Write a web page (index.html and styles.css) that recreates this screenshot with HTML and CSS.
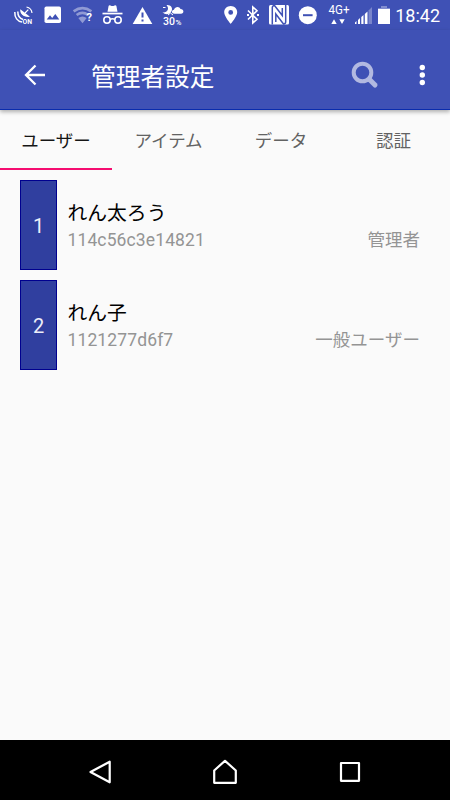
FILE: index.html
```
<!DOCTYPE html>
<html lang="ja">
    <head>
        <meta charset="utf-8">
        <title>管理者設定</title>
        <link rel="stylesheet" href="styles.css">
    </head>
    <body>
        <div class="statusBar">
            <div class="statusLeft">
                <!-- gps -->
                <svg width="30" height="30" viewBox="0 0 30 30">
                    <path class="line" stroke-width="1.500" d="M6.800 12C6.500 17.500 9.500 21.500 14 22M9.800 11.500C9.800 15 11.500 18.500 15 19.500"/>
                    <path class="fill" d="M12.300 9.200C11.500 13 15.500 17.800 22 16.800Z"/>
                    <path class="line" stroke-width="1.200" d="M17 13L20.300 9.700M18.500 7Q23.500 8 24 13"/>
                    <text class="tiny" x="14.500" y="23.700" textLength="9.500" lengthAdjust="spacingAndGlyphs">ON</text>
                </svg>
                <!-- picture -->
                <svg width="30" height="30" viewBox="0 0 30 30">
                    <rect class="fill" x="6.500" y="6.500" width="16.500" height="16.500" rx="1.800"/>
                    <path class="cut" d="M8.700 19.500L12 15.300L14.200 18L17.300 14L21.300 19.500Z"/>
                </svg>
                <!-- wifi -->
                <svg width="30" height="30" viewBox="0 0 30 30">
                    <g opacity="0.42">
                        <path class="line" stroke-width="2.600" d="M5.600 11.400Q14.500 5 23.400 11.400M8.600 15Q14.500 10.800 20 15"/>
                        <path class="fill" d="M10.300 18Q14.500 15 18.700 18L14.500 23.300Z"/>
                    </g>
                    <text class="question" x="18.500" y="20.500">?</text>
                </svg>
                <!-- incognito -->
                <svg width="30" height="30" viewBox="0 0 30 30">
                    <path class="fill" d="M9.500 11.700L10.600 6Q11 5 12.500 5.500Q14.500 6.500 16.500 5.500Q18 5 18.400 6L19.500 11.700Z"/>
                    <rect class="fill" x="4.500" y="12.700" width="20" height="1.700"/>
                    <circle class="line" stroke-width="1.600" cx="9" cy="20" r="3.200"/>
                    <circle class="line" stroke-width="1.600" cx="20" cy="20" r="3.200"/>
                    <path class="line" stroke-width="1.500" d="M12 19.500Q14.500 18 17 19.500"/>
                </svg>
                <!-- warning -->
                <svg width="30" height="30" viewBox="0 0 30 30">
                    <path class="fill" d="M14.500 7L24.300 24H4.700Z"/>
                    <path class="cutLine" stroke-width="2" d="M14.500 12.500V17.500M14.500 19.500V21.500"/>
                </svg>
                <!-- weather -->
                <svg width="30" height="30" viewBox="0 0 30 30">
                    <path class="fill" d="M8.500 5C12.500 4.500 15 7.500 13.700 10.800C12.300 14.500 7.500 15.500 4.500 12.300C9 13 12 9 8.500 5Z"/>
                    <path class="fill" d="M16.500 13.700C13.200 13.700 13.200 10.200 16 9.700C17 6.300 21.500 6 22.500 9C26.300 9.300 26.300 13.700 23 13.700Z"/>
                    <path class="line" stroke-width="1" d="M5 7.500H7.500M10 15L12.500 13L15 15"/>
                    <text class="percent" x="5" y="25.300">30</text>
                    <text class="sign" x="17.500" y="25.300">%</text>
                </svg>
            </div>
            <div class="statusRight">
                <!-- location -->
                <svg width="22" height="30" viewBox="0 0 22 30">
                    <path class="fill" fill-rule="evenodd" d="M10.700 6C7 6 4.200 8.800 4.200 12.300C4.200 16.500 10.700 24 10.700 24S17.200 16.500 17.200 12.300C17.200 8.800 14.400 6 10.700 6ZM10.700 10A2.400 2.400 0 1 1 10.700 14.800A2.400 2.400 0 1 1 10.700 10Z"/>
                </svg>
                <!-- bluetooth -->
                <svg width="22" height="30" viewBox="0 0 22 30">
                    <path class="line" stroke-width="1.600" d="M6 10.500L15 19.300L10.800 23V7L15 10.700L6 19.500"/>
                    <path class="fill" d="M5 14h2v2h-2zM15 14h2v2h-2z"/>
                </svg>
                <!-- nfc -->
                <svg width="30" height="30" viewBox="0 0 30 30">
                    <rect class="fill" x="5" y="5" width="20" height="19.500" rx="1.500"/>
                    <path class="cutLine" stroke-width="1.500" d="M8.300 24.500V7.500Q8.500 5.500 10.500 5.500L18.300 15.500V8M21.700 5V22Q21.500 24 19.500 24L11.800 14V22"/>
                </svg>
                <!-- do not disturb -->
                <svg width="28" height="30" viewBox="0 0 28 30">
                    <circle class="fill" cx="13.800" cy="15.200" r="9"/>
                    <path class="cutLine" stroke-width="2" d="M9 15.200H18.600"/>
                </svg>
                <!-- 4G -->
                <svg width="30" height="30" viewBox="0 0 30 30">
                    <text class="network" x="6.500" y="14" textLength="21" lengthAdjust="spacingAndGlyphs">4G+</text>
                    <path class="fill" d="M9.300 24L12 19.300L14.700 24ZM17.300 19.300H22.700L20 24Z"/>
                </svg>
                <!-- signal -->
                <svg width="24" height="30" viewBox="0 0 24 30">
                    <path class="fill" opacity="0.3" d="M16.500 10.500L20 7V24H16.500Z"/>
                    <path class="fill" d="M3 24V22.500L4.500 21V24ZM6 24V20L8 18V24ZM9.300 24V17L11.500 15V24ZM12.800 24V14L15.500 11.500V24Z"/>
                </svg>
                <!-- battery -->
                <svg width="18" height="30" viewBox="0 0 18 30">
                    <path class="fill" opacity="0.35" d="M5 6H11V8H14V11H2V8H5Z"/>
                    <rect class="fill" x="2" y="9" width="12" height="15"/>
                </svg>
                <div class="clock">18:42</div>
            </div>
        </div>

        <div class="toolbar">
            <svg class="back" width="24" height="24" viewBox="0 0 24 24">
                <path class="line" stroke-width="2.300" d="M22 12H3.500M12.500 2.500L3 12L12.500 21.500"/>
            </svg>
            <div class="title">管理者設定</div>
            <svg class="search" width="30" height="30" viewBox="0 0 30 30">
                <path stroke-width="5" stroke-linecap="round" d="M19.500 19.500L25 25"/>
                <circle stroke-width="4" cx="12.500" cy="12.500" r="8.800"/>
            </svg>
            <svg class="more" width="8" height="24" viewBox="0 0 8 24">
                <circle class="fill" cx="4.300" cy="4.500" r="2.700"/>
                <circle class="fill" cx="4.300" cy="12" r="2.700"/>
                <circle class="fill" cx="4.300" cy="19.500" r="2.700"/>
            </svg>
        </div>

        <div class="tabs">
            <div class="tab selected">ユーザー</div>
            <div class="tab">アイテム</div>
            <div class="tab">データ</div>
            <div class="tab">認証</div>
        </div>

        <div class="userList">
            <div class="user">
                <div class="number">1</div>
                <div class="info">
                    <div class="name">れん太ろう</div>
                    <div class="detail">
                        <span class="userId">114c56c3e14821</span>
                        <span>管理者</span>
                    </div>
                </div>
            </div>
            <div class="user">
                <div class="number">2</div>
                <div class="info">
                    <div class="name">れん子</div>
                    <div class="detail">
                        <span class="userId">1121277d6f7</span>
                        <span>一般ユーザー</span>
                    </div>
                </div>
            </div>
        </div>

        <div class="navBar">
            <svg width="30" height="30" viewBox="0 0 30 30">
                <path class="line" stroke-width="2.200" stroke-linejoin="round" d="M24.700 4.700V25.300L5.500 15Z"/>
            </svg>
            <svg width="30" height="30" viewBox="0 0 30 30">
                <path class="line" stroke-width="2.200" stroke-linejoin="round" d="M15 3.800L25.800 13.500V25.800H4.200V13.500Z"/>
            </svg>
            <svg width="30" height="30" viewBox="0 0 30 30">
                <rect class="line" stroke-width="2.200" stroke-linejoin="round" x="6" y="6" width="18" height="17.800"/>
            </svg>
        </div>
    </body>
</html>
```
FILE: styles.css
```
body{
    margin: 0;
    height: 800px;
    display: flex;
    flex-direction: column;
    background-color: #fafafa;
    font-family: Roboto, "Noto Sans CJK JP", sans-serif;
}

svg{
    display: block;
    flex: none;
}

.fill{
    fill: white;
}

.line{
    fill: none;
    stroke: white;
}

.cut{
    fill: #3f51b5;
}

.cutLine{
    fill: none;
    stroke: #3f51b5;
}

.statusBar{
    height: 30px;
    display: flex;
    justify-content: space-between;
    padding: 0 10px 0 8px;
    background-color: #3f51b5;
    color: white;
}

.statusBar text{
    fill: white;
}

.statusLeft, .statusRight{
    display: flex;
}

.clock{
    width: 46px;
    font-size: 18px;
    line-height: 31px;
    text-align: right;
    white-space: nowrap;
}

.tiny{
    font-size: 6.5px;
    font-weight: bold;
}

.question{
    font-size: 11px;
    font-weight: bold;
}

.percent{
    font-size: 10.5px;
    font-weight: 500;
}

.sign{
    font-size: 8px;
    font-weight: 500;
}

.network{
    font-size: 12px;
}

.toolbar{
    height: 80px;
    flex: none;
    display: flex;
    align-items: center;
    padding: 11px 24px 0 23px;
    box-sizing: border-box;
    background-color: #3f51b5;
    border-bottom: 1px solid #0a2cad;
    box-shadow: 0 2px 4px rgba(0, 0, 0, 0.3);
}

.title{
    flex: 1;
    margin-left: 44px;
    padding-top: 5px;
    color: white;
    font-size: 24.7px;
    line-height: 36px;
}

.search{
    margin-right: 38px;
    fill: none;
    stroke: #b2b9e1;
}

.tabs{
    height: 60px;
    flex: none;
    display: grid;
    grid-template-columns: 112px 113px 112px 113px;
}

.tab{
    height: 60px;
    box-sizing: border-box;
    border-bottom: 2px solid transparent;
    color: #626262;
    font-size: 17.5px;
    line-height: 63px;
    text-align: center;
}

.selected{
    color: #151515;
    border-bottom-color: #f50d70;
}

.userList{
    flex: 1;
    display: flex;
    flex-direction: column;
    gap: 10px;
    padding: 10px 30px 0 20px;
}

.user{
    height: 90px;
    display: flex;
}

.number{
    width: 37px;
    box-sizing: border-box;
    border: 1px solid #00008f;
    background-color: #303f9f;
    color: #eceef8;
    font-size: 20px;
    line-height: 90px;
    text-align: center;
}

.info{
    flex: 1;
    margin-left: 10.5px;
    padding-top: 19px;
}

.name{
    color: black;
    font-size: 19.8px;
    line-height: 29px;
}

.detail{
    display: flex;
    justify-content: space-between;
    color: #949494;
    font-size: 17.5px;
    line-height: 25px;
}

.userId{
    letter-spacing: 0.12px;
}

.navBar{
    height: 60px;
    flex: none;
    display: flex;
    justify-content: space-between;
    padding: 17px 85px 0;
    box-sizing: border-box;
    background-color: black;
}
```
